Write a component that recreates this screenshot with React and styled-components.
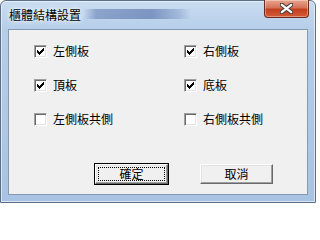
import React, { useState } from "react";
import styled, { createGlobalStyle } from "styled-components";

const Global = createGlobalStyle`
  html, body {
    margin: 0;
    padding: 0;
    background: #ffffff;
  }
  body {
    font-family: "Noto Sans CJK TC", "Liberation Sans", sans-serif;
  }
`;

const Frame = styled.div`
  width: 316px;
  height: 203px;
  box-sizing: border-box;
  display: flex;
  flex-direction: column;
  border-radius: 6px 6px 0 0;
  border: 1px solid #5a6f89;
  background:
    linear-gradient(90deg, transparent 0, transparent 83px, rgba(40, 70, 140, 0.35) 95px, rgba(40, 70, 140, 0.45) 150px, rgba(40, 70, 140, 0.2) 178px, transparent 190px) 0 8px / 100% 10px no-repeat,
    linear-gradient(180deg, #c9dcf1 0, #b5cde9 30px, #a8c3e3 100%);
  box-shadow: inset 0 0 0 1px rgba(255, 255, 255, 0.55);
`;

const TitleBar = styled.div`
  height: 28px;
  display: flex;
  align-items: flex-start;
  justify-content: space-between;
  padding-left: 8px;
`;

const Title = styled.span`
  margin-top: 6px;
  font-size: 12px;
  line-height: 16px;
  color: #000;
  text-shadow: 0 0 6px #ffffff, 0 0 3px #ffffff;
`;

const CloseButton = styled.div`
  width: 45px;
  height: 18px;
  margin-right: 6px;
  margin-top: -1px;
  box-sizing: border-box;
  border: 1px solid #6b2a22;
  border-top: none;
  border-radius: 0 0 4px 4px;
  background: linear-gradient(180deg, #e9a58f 0, #d6735a 45%, #c2401f 55%, #d45a34 100%);
  box-shadow: inset 0 0 0 1px rgba(255, 255, 255, 0.35);
  display: flex;
  align-items: center;
  justify-content: center;
`;

const Client = styled.div`
  flex: 1;
  margin: 0 7px 7px 7px;
  background: #f0f0f0;
  border: 1px solid #8599b0;
  display: flex;
  flex-direction: column;
  font-size: 12px;
  color: #000;
`;

const Options = styled.div`
  display: grid;
  grid-template-columns: 150px 1fr;
  row-gap: 20px;
  padding: 14px 0 0 25px;
`;

const Option = styled.label`
  display: flex;
  align-items: center;
  gap: 6px;
  height: 14px;
  line-height: 14px;
  cursor: default;
`;

const Box = styled.span`
  width: 13px;
  height: 13px;
  box-sizing: border-box;
  background: #ffffff;
  border-style: solid;
  border-width: 1px;
  border-color: #a0a0a0 #ffffff #ffffff #a0a0a0;
  box-shadow: inset 1px 1px 0 #696969, inset -1px -1px 0 #e3e3e3;
  display: flex;
  align-items: center;
  justify-content: center;
  flex: none;
`;

const Buttons = styled.div`
  margin-top: auto;
  display: flex;
  gap: 30px;
  padding: 0 0 9px 85px;
`;

const Button = styled.div`
  width: 75px;
  height: 22px;
  box-sizing: border-box;
  background: #f0f0f0;
  border: 1px solid ${(p) => (p.$default ? "#000000" : "transparent")};
  display: flex;
  font-size: 12px;
`;

const ButtonFace = styled.div`
  flex: 1;
  display: flex;
  align-items: center;
  justify-content: center;
  border-style: solid;
  border-width: 1px;
  border-color: #ffffff #696969 #696969 #ffffff;
  box-shadow: inset -1px -1px 0 #a0a0a0, inset 1px 1px 0 #e3e3e3;
  padding: 2px;
`;

const Focus = styled.div`
  flex: 1;
  align-self: stretch;
  display: flex;
  align-items: center;
  justify-content: center;
  border: 1px dotted ${(p) => (p.$on ? "#000000" : "transparent")};
  line-height: 12px;
`;

function Check({ on }) {
  return (
    <Box>
      {on && (
        <svg width="7" height="7" viewBox="0 0 7 7" shapeRendering="crispEdges">
          <path
            d="M6 0h1v1H6zM5 1h2v1H5zM0 2h1v1H0zM4 2h3v1H4zM0 3h2v1H0zM3 3h3v1H3zM0 4h5v1H0zM1 5h3v1H1zM2 6h1v1H2z"
            fill="#000"
          />
        </svg>
      )}
    </Box>
  );
}

const items = [
  { label: "左側板", on: true },
  { label: "右側板", on: true },
  { label: "頂板", on: true },
  { label: "底板", on: true },
  { label: "左側板共側", on: false },
  { label: "右側板共側", on: false },
];

export default function App() {
  const [state, setState] = useState(items);

  function toggle(i) {
    setState(state.map((x, j) => (j === i ? { ...x, on: !x.on } : x)));
  }

  return (
    <>
      <Global />
      <Frame>
        <TitleBar>
          <Title>櫃體結構設置</Title>
          <CloseButton>
            <svg width="13" height="11" viewBox="0 0 13 11">
              <path
                d="M1.5 1.5 L11.5 9.5 M11.5 1.5 L1.5 9.5"
                stroke="#4a3b39"
                strokeWidth="4.2"
                strokeLinecap="round"
              />
              <path
                d="M1.8 1.8 L11.2 9.2 M11.2 1.8 L1.8 9.2"
                stroke="#ffffff"
                strokeWidth="2.2"
                strokeLinecap="round"
              />
            </svg>
          </CloseButton>
        </TitleBar>
        <Client>
          <Options>
            {state.map((x, i) => (
              <Option key={x.label} onClick={() => toggle(i)}>
                <Check on={x.on} />
                <span>{x.label}</span>
              </Option>
            ))}
          </Options>
          <Buttons>
            <Button $default>
              <ButtonFace>
                <Focus $on>確定</Focus>
              </ButtonFace>
            </Button>
            <Button>
              <ButtonFace>
                <Focus>取消</Focus>
              </ButtonFace>
            </Button>
          </Buttons>
        </Client>
      </Frame>
    </>
  );
}
